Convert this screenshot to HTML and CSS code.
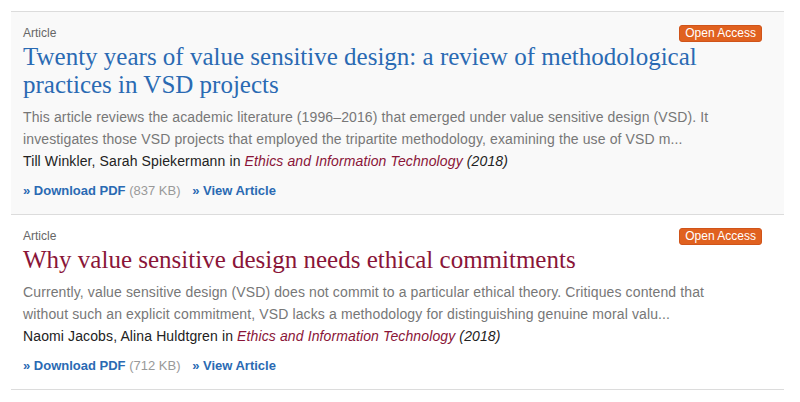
FILE: index.html
```html
<!DOCTYPE html>
<html lang="en">
<head>
<meta charset="utf-8">
<title>Articles</title>
<link rel="stylesheet" href="styles.css">
</head>
<body>
<ul class="results">
  <li class="item item-hover">
    <div class="meta-row">
      <span class="type">Article</span>
      <span class="badge">Open Access</span>
    </div>
    <h2 class="title title-blue">Twenty years of value sensitive design: a review of methodological practices in VSD projects</h2>
    <p class="desc">This article reviews the academic literature (1996–2016) that emerged under value sensitive design (VSD). It investigates those VSD projects that employed the tripartite methodology, examining the use of VSD m...</p>
    <p class="authors">Till Winkler, Sarah Spiekermann in <em class="journal">Ethics and Information Technology</em> <em>(2018)</em></p>
    <div class="links">
      <a class="link" href="#">» Download PDF</a> <span class="size">(837 KB)</span>
      <a class="link link-view" href="#">» View Article</a>
    </div>
  </li>
  <li class="item">
    <div class="meta-row">
      <span class="type">Article</span>
      <span class="badge">Open Access</span>
    </div>
    <h2 class="title title-maroon">Why value sensitive design needs ethical commitments</h2>
    <p class="desc">Currently, value sensitive design (VSD) does not commit to a particular ethical theory. Critiques contend that without such an explicit commitment, VSD lacks a methodology for distinguishing genuine moral valu...</p>
    <p class="authors">Naomi Jacobs, Alina Huldtgren in <em class="journal">Ethics and Information Technology</em> <em>(2018)</em></p>
    <div class="links">
      <a class="link" href="#">» Download PDF</a> <span class="size">(712 KB)</span>
      <a class="link link-view" href="#">» View Article</a>
    </div>
  </li>
</ul>
</body>
</html>
```
FILE: styles.css
```css
html, body {
  margin: 0;
  background: #fff;
}
body {
  padding: 11px 16px 0 11px;
  font-family: "Liberation Sans", Arial, sans-serif;
  color: #222;
}
.results {
  list-style: none;
  margin: 0;
  padding: 0;
  border-top: 1px solid #dcdcdc;
}
.item {
  padding: 12px 22px 13px 12px;
  border-bottom: 1px solid #dcdcdc;
}
.item-hover {
  background: #f9f9f9;
}
.meta-row {
  display: flex;
  justify-content: space-between;
  align-items: center;
  height: 18px;
}
.type {
  font-size: 12px;
  line-height: 18px;
  color: #666;
}
.badge {
  background: #e0611f;
  border: 1px solid #d0541a;
  color: #fff;
  font-size: 12px;
  line-height: 15px;
  padding: 0 5px;
  border-radius: 3px;
  margin-top: 1px;
}
.title {
  margin: 1px 0 0;
  font-family: "Liberation Serif", "Times New Roman", serif;
  font-weight: normal;
  font-size: 25px;
  line-height: 28px;
}
.title-blue {
  color: #2a6ab3;
}
.title-maroon {
  color: #8a1538;
}
.desc {
  margin: 7px 0 0;
  max-width: 715px;
  font-size: 14px;
  line-height: 22px;
  color: #777;
  letter-spacing: 0.12px;
}
.authors {
  margin: 0;
  font-size: 14px;
  line-height: 22px;
  color: #222;
  letter-spacing: 0.12px;
}
.journal {
  color: #8a1538;
}
.links {
  margin-top: 9px;
  font-size: 13px;
  line-height: 20px;
}
.link {
  color: #2a6ab3;
  font-weight: bold;
  text-decoration: none;
}
.link-view {
  margin-left: 8px;
}
.size {
  color: #999;
}
```
